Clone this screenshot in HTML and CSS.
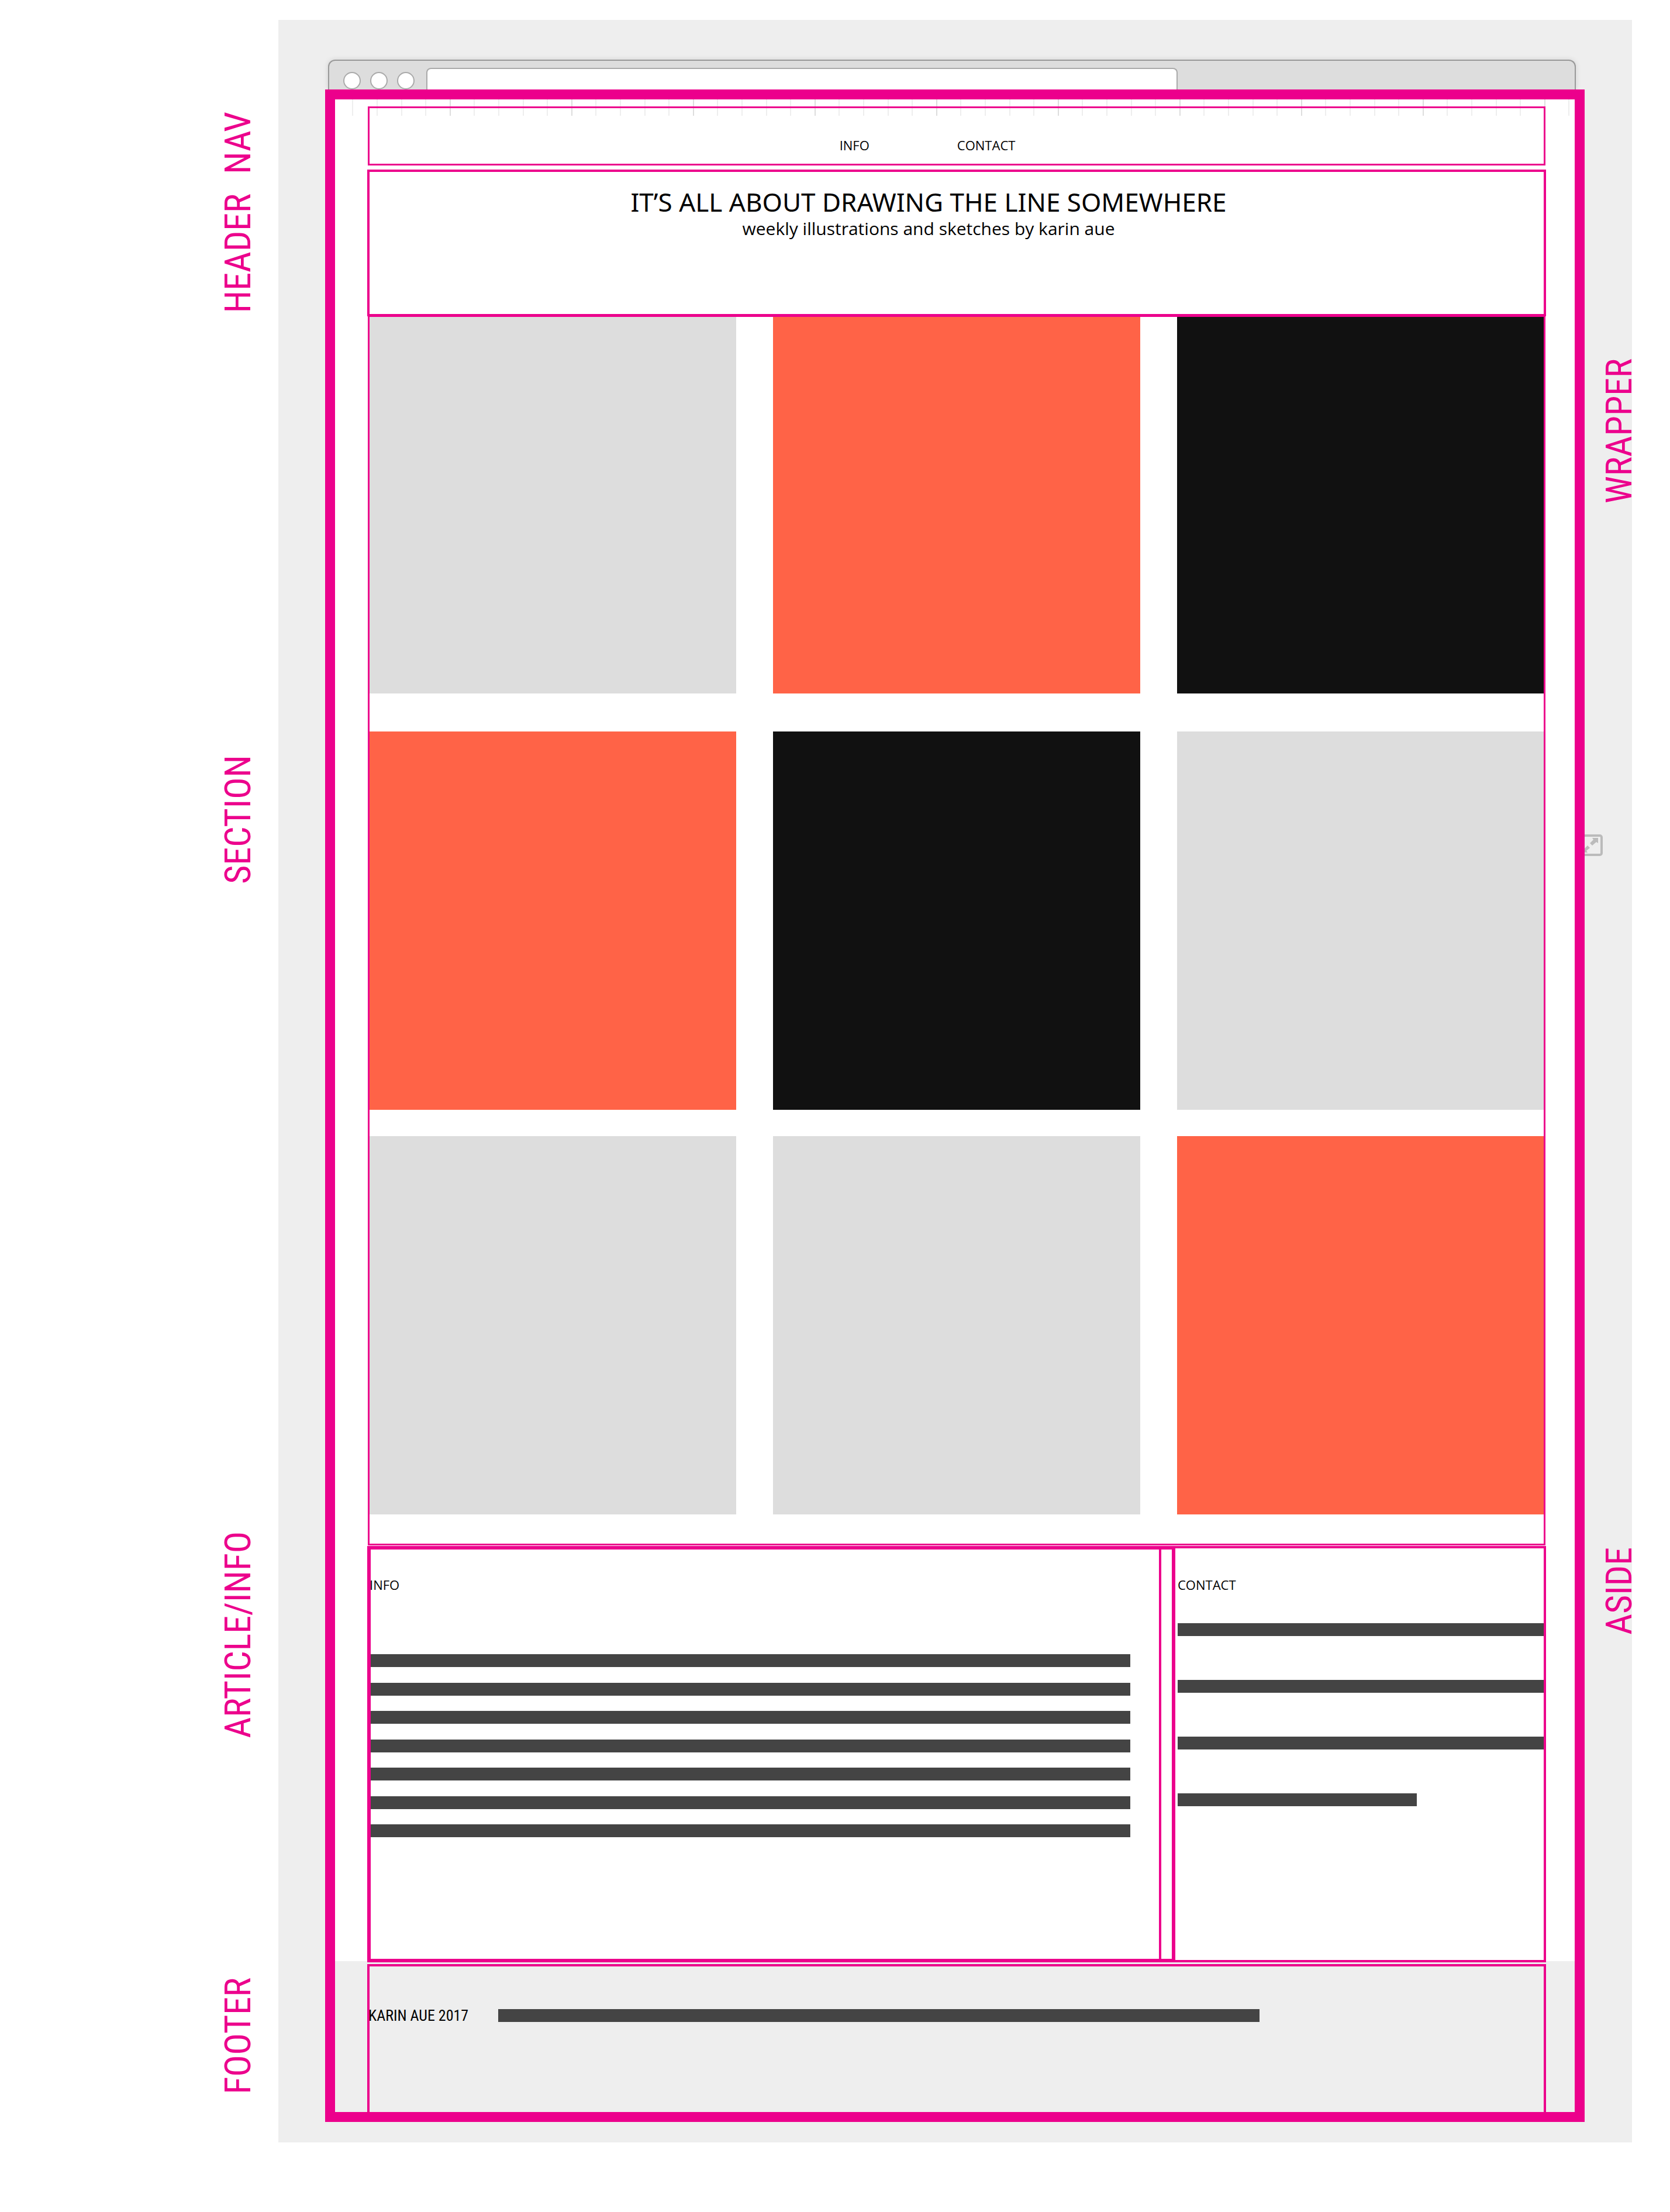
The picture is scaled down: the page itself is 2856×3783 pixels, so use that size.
FILE: index.html
```
<!DOCTYPE html>
<html lang="en">
<head>
<meta charset="utf-8">
<meta name="viewport" content="width=device-width, initial-scale=1">
<title>Karin Aue – page wireframe</title>
<link rel="stylesheet" href="styles.css">
</head>
<body>
<div class="page">
  <div class="gutter">
    <span class="label">NAV</span>
    <span class="label">HEADER</span>
    <span class="label">SECTION</span>
    <span class="label">ARTICLE/INFO</span>
    <span class="label">FOOTER</span>
  </div>

  <div class="stage">
    <div class="chrome">
      <div class="dots"><i class="dot"></i><i class="dot"></i><i class="dot"></i></div>
      <input class="url" type="text" aria-label="Address">
    </div>

    <div class="wrapper">
      <nav class="nav frame frame--thin">
        <a class="nav-link" href="#info">INFO</a>
        <a class="nav-link" href="#contact">CONTACT</a>
      </nav>

      <header class="header frame">
        <h1 class="title">IT’S ALL ABOUT DRAWING THE LINE SOMEWHERE</h1>
        <p class="subtitle">weekly illustrations and sketches by karin aue</p>
      </header>

      <section class="gallery frame frame--thin">
        <div class="row row--loose">
          <div class="tile tile--grey"></div>
          <div class="tile tile--coral"></div>
          <div class="tile tile--black"></div>
        </div>
        <div class="row">
          <div class="tile tile--coral"></div>
          <div class="tile tile--black"></div>
          <div class="tile tile--grey"></div>
        </div>
        <div class="row">
          <div class="tile tile--grey"></div>
          <div class="tile tile--grey"></div>
          <div class="tile tile--coral"></div>
        </div>
      </section>

      <div class="details">
        <article class="article frame frame--thick" id="info">
          <h2 class="heading">INFO</h2>
          <div class="lines">
            <div class="line"></div>
            <div class="line"></div>
            <div class="line"></div>
            <div class="line"></div>
            <div class="line"></div>
            <div class="line"></div>
            <div class="line"></div>
          </div>
        </article>
        <aside class="aside frame" id="contact">
          <h2 class="heading">CONTACT</h2>
          <div class="lines">
            <div class="line"></div>
            <div class="line"></div>
            <div class="line"></div>
            <div class="line line--short"></div>
          </div>
        </aside>
      </div>

      <footer class="footer">
        <div class="footer-box">
          <span class="credit">KARIN AUE 2017</span>
          <div class="line line--fill"></div>
        </div>
      </footer>
    </div>

    <button class="expand" type="button" aria-label="Expand">
      <svg class="expand-icon" viewBox="0 0 38 37" aria-hidden="true">
        <rect x="2" y="2" width="34" height="33" rx="3" fill="none" stroke="#bbb" stroke-width="4"/>
        <path d="M20 6h10v9l-3-2-7 6-4-4 6-6zM8 31H4v-8l3 1 5-5 4 4-6 5 2 3z" fill="#bbb"/>
      </svg>
    </button>
    <span class="label label--wrapper">WRAPPER</span>
    <span class="label label--aside">ASIDE</span>
  </div>
</div>
</body>
</html>
```
FILE: styles.css
```
:root {
  --pink: #ec008c;
  --ink: #444;
}

* {
  box-sizing: border-box;
}

body {
  margin: 0;
  background: #fff;
  color: #000;
  font-family: "Open Sans", "Noto Sans", sans-serif;
}

.page {
  display: grid;
  grid-template-columns: 476px 1fr;
  padding-right: 65px;
}

/* Region labels in the left margin, each ending at the foot of its track */
.gutter {
  display: grid;
  grid-template-rows: 298px 237px 977px 1460px 610px;
  align-content: start;
  align-items: end;
  justify-items: end;
  padding-right: 38px;
}

.label {
  color: var(--pink);
  font-family: "Roboto Condensed", Roboto, sans-serif;
  font-size: 62px;
  line-height: 62px;
  white-space: nowrap;
  writing-mode: vertical-rl;
  transform: rotate(180deg);
}

.label--wrapper,
.label--aside {
  position: absolute;
  z-index: 2;
  right: -9px;
}

.label--wrapper {
  top: 579px;
}

.label--aside {
  top: 2612px;
}

.stage {
  position: relative;
  margin-top: 34px;
  padding: 68px 81px 35px 80px;
  background: #eee;
}

/* Browser window */
.chrome {
  display: flex;
  align-items: flex-end;
  gap: 20px;
  height: 51px;
  margin: 0 15px 0 5px;
  padding-left: 24px;
  border: 2px solid #999;
  border-bottom: 0;
  border-radius: 12px 12px 0 0;
  background: #ddd;
  box-shadow: 0 0 10px rgba(0, 0, 0, 0.12);
}

.dots {
  display: flex;
  gap: 16px;
}

.dot {
  width: 30px;
  height: 30px;
  border: 2px solid #aaa;
  border-radius: 50%;
  background: #fff;
}

.url {
  flex: 0 1 61%;
  height: 37px;
  padding: 0 16px;
  border: 2px solid #aaa;
  border-bottom: 0;
  border-radius: 8px 8px 0 0;
  background: #fff;
  font-size: 22px;
}

.wrapper {
  position: relative;
  z-index: 1;
  border: 17px solid var(--pink);
  background-color: #fff;
  /* Column ruler along the top edge */
  background-image: linear-gradient(to right,
    #ddd 0 2px, transparent 2px 41px,
    #eee 41px 43px, transparent 43px 83px,
    #eee 83px 85px, transparent 85px 125px,
    #eee 125px 127px, transparent 127px 166px,
    #eee 166px 168px, transparent 168px);
  background-position: -12px 0;
  background-repeat: repeat-x;
  background-size: 208px 28px;
}

.frame {
  outline: 4px solid var(--pink);
  outline-offset: -4px;
}

.frame--thin {
  outline-width: 3px;
  outline-offset: -3px;
}

.frame--thick {
  outline-width: 6px;
  outline-offset: -6px;
}

.nav {
  display: flex;
  justify-content: center;
  gap: 150px;
  height: 101px;
  margin: 12px 50px 7px 56px;
  padding: 51px 100px 0 0;
}

.nav-link {
  color: inherit;
  font-size: 22px;
  line-height: 30px;
  text-decoration: none;
}

.header {
  position: relative;
  z-index: 1;
  height: 251px;
  margin: 0 49px 0 55px;
  padding: 27px 96px 0 0;
  text-align: center;
}

.title {
  margin: 0;
  font-family: "Noto Sans", "Open Sans", sans-serif;
  font-size: 44px;
  font-weight: 400;
  line-height: 56px;
}

.subtitle {
  margin: 0;
  font-size: 30px;
  line-height: 36px;
}

.gallery {
  display: flex;
  flex-direction: column;
  gap: 45px;
  margin: -2px 50px 1px 56px;
  padding: 0 3px 53px;
}

.row {
  display: grid;
  grid-template-columns: repeat(3, 1fr);
  gap: 63px;
}

.row--loose {
  padding-bottom: 20px;
}

.tile {
  height: 647px;
}

.tile--grey {
  background: #ddd;
}

.tile--coral {
  background: #ff6347;
}

.tile--black {
  background: #111;
}

/* Article and aside overlap by the middle track */
.details {
  position: relative;
  z-index: 1;
  display: grid;
  grid-template-columns: 1354fr 28px 634fr;
  grid-template-rows: 712px;
  margin: 0 49px 0 55px;
}

.article {
  grid-area: 1 / 1 / 2 / 3;
  padding: 51px 77px 0 4px;
}

.aside {
  grid-area: 1 / 2 / 2 / 4;
  padding: 51px 1px 0 32px;
}

.heading {
  margin: 0;
  font-size: 22px;
  font-weight: 400;
  line-height: 30px;
}

.lines {
  display: flex;
  flex-direction: column;
  justify-content: space-between;
  height: 313px;
}

.article .lines {
  margin-top: 104px;
}

.aside .lines {
  margin-top: 51px;
}

.line {
  height: 22px;
  background: var(--ink);
}

.line--short {
  width: 65%;
}

.line--fill {
  flex: 1;
}

.footer {
  margin-top: -2px;
  padding: 5px 49px 0 55px;
  background: #eee;
}

.footer-box {
  display: flex;
  align-items: center;
  height: 253px;
  padding: 0 490px 81px 2px;
  border: solid var(--pink);
  border-width: 4px 0 0;
  box-shadow: inset 4px 0 var(--pink), inset -4px 0 var(--pink);
}

.credit {
  flex: 0 0 222px;
  font-family: "Roboto Condensed", Roboto, sans-serif;
  font-size: 26px;
  line-height: 30px;
}

.expand {
  position: absolute;
  top: 1393px;
  right: 50px;
  width: 38px;
  height: 37px;
  padding: 0;
  border: 0;
  background: none;
}

.expand-icon {
  display: block;
  width: 100%;
  height: 100%;
}
```
